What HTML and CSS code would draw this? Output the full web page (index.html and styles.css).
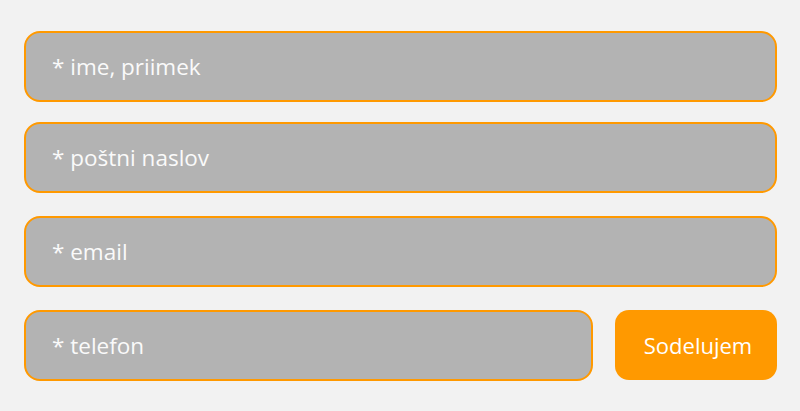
FILE: index.html
```html
<!DOCTYPE html>
<html lang="sl">
<head>
  <meta charset="UTF-8" />
  <meta name="viewport" content="width=device-width, initial-scale=1.0"/>
  <title>Sodelujem</title>
  <link rel="stylesheet" href="styles.css">
</head>
<body>
  <form class="entry-form">
    <input class="field first" type="text" placeholder="* ime, priimek" />
    <input class="field" type="text" placeholder="* poštni naslov" />
    <input class="field" type="email" placeholder="* email" />
    <div class="last-row">
      <input class="field phone" type="tel" placeholder="* telefon" />
      <button class="submit-btn" type="button">Sodelujem</button>
    </div>
  </form>
</body>
</html>
```

FILE: styles.css
```css
* {
  margin: 0;
  padding: 0;
  box-sizing: border-box;
}

html, body {
  width: 100%;
  height: 100%;
  overflow: hidden;
  background-color: #f2f2f2;
  font-family: 'Open Sans', sans-serif;
}

.entry-form {
  display: flex;
  flex-direction: column;
  padding: 31px 23px 0 24px;
}

.field {
  height: 71px;
  width: 100%;
  margin-top: 23px;
  padding: 0 26px 1px;
  background: #b3b3b3;
  border: 2px solid #ff9900;
  border-radius: 16px;
  font-family: 'Open Sans', sans-serif;
  font-size: 22.5px;
  color: #ffffff;
  outline: none;
}

.field.first {
  margin-top: 0;
}

.field::placeholder {
  color: #fafafa;
  opacity: 1;
}

.entry-form .field:nth-child(2) {
  margin-top: 20px;
}

.last-row {
  display: flex;
  gap: 22px;
  margin-top: 23px;
}

.last-row .field {
  margin-top: 0;
  flex: 1;
}

.submit-btn {
  width: 162px;
  height: 70px;
  padding-left: 4px;
  border: none;
  border-radius: 14px;
  background: #ff9900;
  color: #ffffff;
  font-family: 'Open Sans', sans-serif;
  font-size: 22px;
  cursor: pointer;
}
```
